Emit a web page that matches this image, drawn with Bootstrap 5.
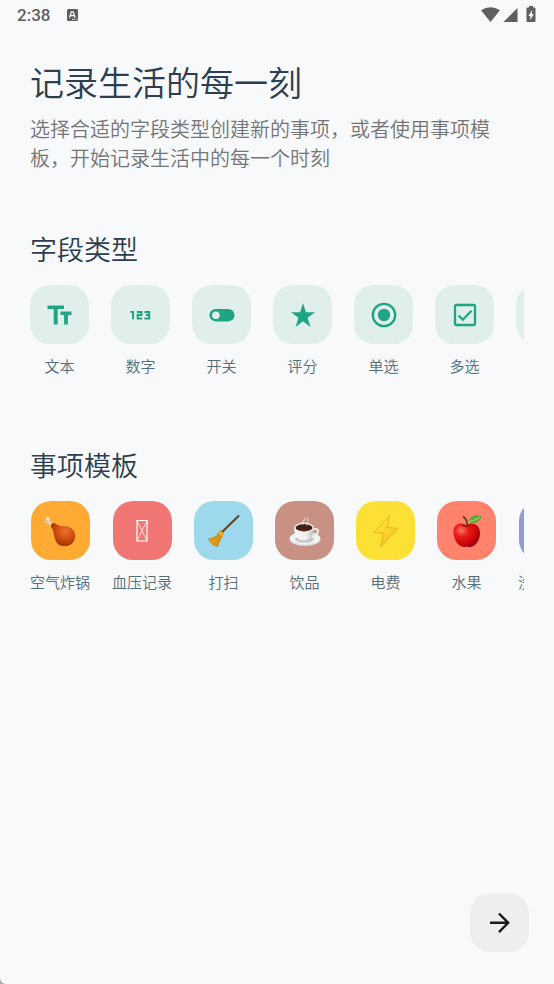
<!DOCTYPE html>
<html lang="zh-CN">
<head>
<meta charset="utf-8">
<meta name="viewport" content="width=device-width, initial-scale=1">
<title>记录生活的每一刻</title>
<link href="https://cdn.jsdelivr.net/npm/bootstrap@5.3.0/dist/css/bootstrap.min.css" rel="stylesheet">
<style>
  body { background: #a9abad; color: #2c3e50; font-family: "Noto Sans CJK SC", sans-serif; font-weight: 350; }
  .screen { background: #f7f9fb; border-bottom-left-radius: 6px; }
  .status { height: 30px; padding: 0 17px; color: #5f5f5f; font: 500 17px/30px Roboto, sans-serif; }
  .content { padding: 29px 30px 0; }
  .page-title { font-size: 34px; line-height: 46px; font-weight: 350; margin-bottom: 9px; }
  .intro { color: #757575; font-size: 20px; line-height: 29px; margin-bottom: 58px; }
  .section-title { font-size: 27px; line-height: 38px; font-weight: 350; margin-bottom: 17px; }
  .scroller { gap: 22px; overflow-x: auto; scrollbar-width: none; }
  .scroller::-webkit-scrollbar { display: none; }
  .fields { margin-bottom: 69px; }
  .item { color: #546e7a; font-size: 15px; line-height: 22px; font-weight: 350; }
  .tile { width: 59px; height: 59px; border-radius: 20px; margin-bottom: 11px; color: #1fa583; background: #e0efec; }
  .bg-orange-soft { background: #ffab33; }
  .bg-rose { background: #f07673; }
  .bg-sky { background: #9dd8ed; }
  .bg-mocha { background: #c99184; }
  .bg-lemon { background: #fde034; }
  .bg-coral { background: #ff826c; }
  .bg-iris { background: #929dd5; }
  .next { width: 59px; height: 59px; border-radius: 20px; background: #edeef0; color: #1c1b1b; margin: 0 25px 32px 0; }
</style>
<script src="https://cdn.jsdelivr.net/npm/bootstrap@5.3.0/dist/js/bootstrap.bundle.min.js"></script>
</head>
<body>
<div class="screen min-vh-100 d-flex flex-column">
  <header class="status d-flex align-items-center">
    <span>2:38</span>
    <svg class="ms-3" width="13" height="14" viewBox="0 0 13 14" aria-hidden="true"><rect x="1" y="1" width="11" height="12" rx="1.3" fill="currentColor"/><path d="M3.4 9.6 5.5 3.8h1.6l2 5.8M4.4 7.7h3.7" fill="none" stroke="#f7f9fb" stroke-width="1.3"/><path d="M6 11.3h3M10 11.3h1" stroke="#f7f9fb" stroke-width=".8"/></svg>
    <svg class="ms-auto" width="56" height="18" viewBox="0 0 56 18" fill="currentColor" aria-hidden="true">
      <path d="M0 4.200Q9.500-1.800 19 4.200L9.500 16Z"/>
      <path d="M36.500 2v14H22.500Z"/>
      <path d="M48 1.500V0h4v1.500h1.500q1 0 1 1V15q0 1-1 1h-7q-1 0-1-1V2.500q0-1 1-1Z"/>
      <path d="m51.300 4-4 6h2v4l3.500-6h-2Z" fill="#f7f9fb"/>
    </svg>
  </header>

  <main class="content">
    <h1 class="page-title">记录生活的每一刻</h1>
    <p class="intro pe-4">选择合适的字段类型创建新的事项，或者使用事项模板，开始记录生活中的每一个时刻</p>

    <section>
      <h2 class="section-title">字段类型</h2>
      <div class="scroller fields d-flex">
        <button type="button" class="item btn p-0 border-0 flex-shrink-0 d-flex flex-column align-items-center">
          <span class="tile d-flex align-items-center justify-content-center"><svg width="26" height="26" viewBox="0 0 26 26" fill="currentColor"><path d="M.5 3.500h16.500v3.600h-6.300V22.500h-4V7.100H.5ZM13.500 9.500h11v3.600h-3.600v9.400h-3.800v-9.400h-3.600Z"/></svg></span>
          <span>文本</span>
        </button>
        <button type="button" class="item btn p-0 border-0 flex-shrink-0 d-flex flex-column align-items-center">
          <span class="tile d-flex align-items-center justify-content-center"><svg width="26" height="26" viewBox="0 0 26 26" fill="none" stroke="currentColor" stroke-width="2"><path d="M2.500 10h2.600V17.300M8.800 10h4.600V13H9.700v3.400h4.500M16.400 10h4.800v6.400h-4.800M17.800 13.100h3.400"/></svg></span>
          <span>数字</span>
        </button>
        <button type="button" class="item btn p-0 border-0 flex-shrink-0 d-flex flex-column align-items-center">
          <span class="tile d-flex align-items-center justify-content-center"><svg width="26" height="26" viewBox="0 0 26 26"><rect x=".5" y="7" width="25" height="12.400" rx="6.200" fill="currentColor"/><circle cx="6.900" cy="13.200" r="3.800" fill="#e0efec"/></svg></span>
          <span>开关</span>
        </button>
        <button type="button" class="item btn p-0 border-0 flex-shrink-0 d-flex flex-column align-items-center">
          <span class="tile d-flex align-items-center justify-content-center"><svg width="26" height="26" viewBox="0 0 26 26" fill="currentColor"><path d="m13 1 2.900 9.200H25l-7.400 5.500L20.400 25 13 19.300 5.600 25l2.800-9.300L1 10.200h9.100Z"/></svg></span>
          <span>评分</span>
        </button>
        <button type="button" class="item btn p-0 border-0 flex-shrink-0 d-flex flex-column align-items-center">
          <span class="tile d-flex align-items-center justify-content-center"><svg width="26" height="26" viewBox="0 0 26 26"><circle cx="13" cy="13" r="11.200" fill="none" stroke="currentColor" stroke-width="2.300"/><circle cx="13" cy="13" r="6.200" fill="currentColor"/></svg></span>
          <span>单选</span>
        </button>
        <button type="button" class="item btn p-0 border-0 flex-shrink-0 d-flex flex-column align-items-center">
          <span class="tile d-flex align-items-center justify-content-center"><svg width="26" height="26" viewBox="0 0 26 26" fill="none" stroke="currentColor" stroke-width="2.300"><rect x="3" y="3" width="20" height="20" rx="1.300"/><path d="m6.600 13.500 4.200 4.200 8.700-8.900"/></svg></span>
          <span>多选</span>
        </button>
        <button type="button" class="item btn p-0 border-0 flex-shrink-0 d-flex flex-column align-items-center" aria-label="更多字段">
          <span class="tile"></span>
        </button>
      </div>
    </section>

    <section>
      <h2 class="section-title">事项模板</h2>
      <div class="scroller d-flex">
        <button type="button" class="item btn p-0 border-0 flex-shrink-0 d-flex flex-column align-items-center">
          <span class="tile bg-orange-soft d-flex align-items-center justify-content-center"><svg width="34" height="34" viewBox="0 0 36 36">
            <defs><radialGradient id="meat" cx=".6" cy=".35" r=".65"><stop offset="0" stop-color="#ed7431"/><stop offset=".55" stop-color="#d14e0c"/><stop offset="1" stop-color="#9f3104"/></radialGradient></defs>
            <path d="m4 7 6 5" stroke="#e8d3b4" stroke-width="3.500"/><circle cx="5" cy="5" r="2" fill="#f4e7d0"/><circle cx="3.200" cy="8" r="2" fill="#dcc4a0"/>
            <path d="M8.500 12c0-2 3-3.200 5-1.800 2.800 2.500 6 2.100 11 2.800 6 1 10 5.500 9.500 11-.6 6-5 10-11 10-7 0-9.500-4-11-10-1-4.600-1-7.500-2.500-9-1-.8-1-1.500-1-3Z" fill="url(#meat)"/></svg></span>
          <span>空气炸锅</span>
        </button>
        <button type="button" class="item btn p-0 border-0 flex-shrink-0 d-flex flex-column align-items-center">
          <span class="tile bg-rose d-flex align-items-center justify-content-center"><svg width="12" height="22" viewBox="0 0 12 22" fill="none" stroke="#fff"><path d="M1 .5h10v20.500H1Z" stroke-width="1.200"/><path d="m1 .5 10 20.500M11 .5 1 21" stroke-width=".8"/></svg></span>
          <span>血压记录</span>
        </button>
        <button type="button" class="item btn p-0 border-0 flex-shrink-0 d-flex flex-column align-items-center">
          <span class="tile bg-sky d-flex align-items-center justify-content-center"><svg width="36" height="36" viewBox="0 0 36 36">
            <path d="M14.500 20.500 32.500 3" stroke="#54371f" stroke-width="1.900" stroke-linecap="round"/><path d="m16 18.500 16-15.500" stroke="#8a684b" stroke-width=".5"/>
            <path d="M12.500 20.500c-3 3.500-6 4.500-10 5.500 1.300 3.900 5 6.600 9 7.800 1.500-4.500 2-8 5-10.300Z" fill="#e9a213" stroke="#b57008" stroke-width=".6"/><path d="m12.500 23-7 5m8.500-4-6.500 7.500m7.500-7-4 8" stroke="#b87508" stroke-width=".8"/><path d="m12 20.500 2.500-3 3 3-2.500 3Z" fill="#f5b72e" stroke="#a66809" stroke-width=".6"/></svg></span>
          <span>打扫</span>
        </button>
        <button type="button" class="item btn p-0 border-0 flex-shrink-0 d-flex flex-column align-items-center">
          <span class="tile bg-mocha d-flex align-items-center justify-content-center"><svg width="34" height="34" viewBox="0 0 36 36">
            <defs><linearGradient id="cup"><stop stop-color="#fafafa"/><stop offset=".6" stop-color="#efefef"/><stop offset="1" stop-color="#bebebe"/></linearGradient></defs>
            <ellipse cx="18" cy="26.500" rx="16.500" ry="7.500" fill="#e0e0e0"/><ellipse cx="18" cy="25.500" rx="16" ry="6.500" fill="#f3f3f3"/><ellipse cx="17.500" cy="26.800" rx="10" ry="3.700" fill="#c6c6c6"/>
            <path d="M25 17.500c5-3 8-1.500 6.500 1.800-1.200 2.800-4.500 4-8 4.500" fill="none" stroke="#ededed" stroke-width="2.200"/>
            <path d="M6.500 14.500c0 8 3.500 13.500 10.500 13.500s10.500-5.500 10.500-13.500Z" fill="url(#cup)"/><ellipse cx="17" cy="14.300" rx="10.500" ry="5" fill="#f4f4f4"/><ellipse cx="17" cy="14.500" rx="8.900" ry="3.800" fill="#432013"/><path d="M9 15.500q8 4.500 16 0-4 3-8 3t-8-3" fill="#80503b"/>
            <path d="M16 11c-3-4 4-4 2-7m2 8c-2-4 3-3 1-8" fill="none" stroke="#fff" stroke-width="1.200" stroke-linecap="round" opacity=".55"/></svg></span>
          <span>饮品</span>
        </button>
        <button type="button" class="item btn p-0 border-0 flex-shrink-0 d-flex flex-column align-items-center">
          <span class="tile bg-lemon d-flex align-items-center justify-content-center"><svg width="36" height="36" viewBox="0 0 36 36">
            <defs><linearGradient id="bolt" x2=".4" y2="1"><stop stop-color="#ffea3b"/><stop offset="1" stop-color="#f9c324"/></linearGradient></defs>
            <path d="M21.500 2.500 6 19.500l9.500.8L12.500 34 30 15.300l-11-.7Z" fill="url(#bolt)" stroke="#d9ac22" stroke-width=".8" stroke-linejoin="round"/></svg></span>
          <span>电费</span>
        </button>
        <button type="button" class="item btn p-0 border-0 flex-shrink-0 d-flex flex-column align-items-center">
          <span class="tile bg-coral d-flex align-items-center justify-content-center"><svg width="36" height="36" viewBox="0 0 36 36">
            <defs><radialGradient id="apple" cx=".3" cy=".3" r=".75"><stop offset="0" stop-color="#ff7a6a"/><stop offset=".35" stop-color="#e81b18"/><stop offset=".75" stop-color="#cf0508"/><stop offset="1" stop-color="#960007"/></radialGradient></defs>
            <path d="M17 12c-7-4-13 0-12.500 8C5 27 9 32.500 13 33.500c2 .6 3.500.5 5 0 2 .7 3.500.7 5.500 0C28 31.500 31 26 31 20c0-8-7-12-14-8Z" fill="url(#apple)"/><path d="M13.500 12q4 2.700 8 0" fill="none" stroke="#8f0507" stroke-width="1.300"/>
            <path d="M18 13q.8-6-3.500-9" fill="none" stroke="#653b1b" stroke-width="1.700" stroke-linecap="round"/><path d="M19 9c2-6 7-8 13.500-6C31.500 9 26 11.500 19 9Z" fill="#62a63b"/><path d="M19 9q6-1 12-5" fill="none" stroke="#b1d46a" stroke-width=".9"/></svg></span>
          <span>水果</span>
        </button>
        <button type="button" class="item btn p-0 border-0 flex-shrink-0 d-flex flex-column align-items-center">
          <span class="tile bg-iris"></span>
          <span>洗澡记录</span>
        </button>
      </div>
    </section>
  </main>

  <footer class="mt-auto d-flex justify-content-end">
    <button type="button" class="next btn p-0 border-0 d-flex align-items-center justify-content-center" aria-label="下一步">
      <svg width="24" height="24" viewBox="0 0 24 24" fill="none" stroke="currentColor" stroke-width="2.400"><path d="M2 11.800h18M11 2.500l9.200 9.300-9.200 9.300"/></svg>
    </button>
  </footer>
</div>
</body>
</html>
